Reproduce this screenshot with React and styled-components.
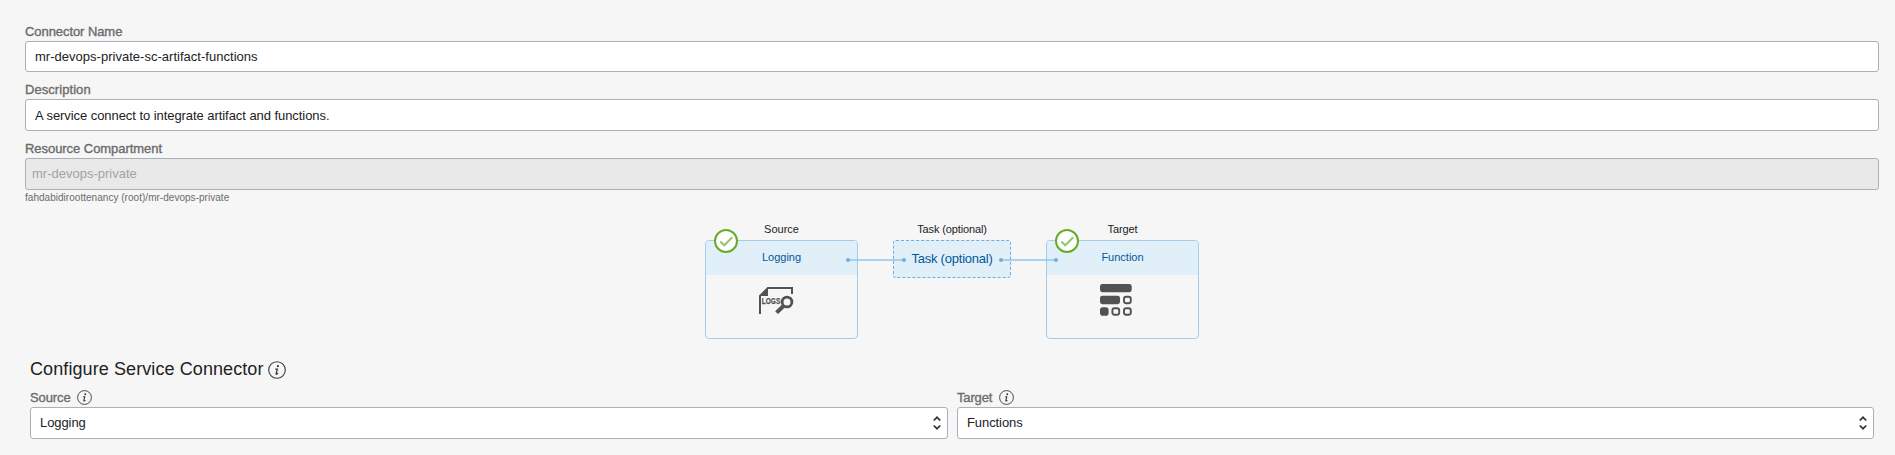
import React from "react";
import styled, { createGlobalStyle } from "styled-components";

const GlobalStyle = createGlobalStyle`
  * { box-sizing: border-box; }
  body {
    margin: 0;
    background: #f6f6f6;
    font-family: "Liberation Sans", Arial, sans-serif;
    color: #222;
    overflow: hidden;
  }
`;

const Page = styled.main`
  height: 455px;
  padding: 24px 16px 0 25px;
  display: flex;
  flex-direction: column;
  overflow: hidden;
`;

const Field = styled.div`
  display: flex;
  flex-direction: column;
  margin-bottom: ${(p) => p.$gap || 0}px;
`;

const Label = styled.label`
  display: flex;
  align-items: center;
  height: 17px;
  padding-bottom: 2px;
  font-size: 13px;
  line-height: 15px;
  color: #6b6b6b;
  -webkit-text-stroke: 0.35px #6b6b6b;
  letter-spacing: ${(p) => p.$spacing || 0}px;
`;

const Input = styled.input`
  width: 100%;
  height: ${(p) => p.$height || 32}px;
  padding: 0 9px;
  border: 1px solid #a9b0ba;
  border-radius: 3px;
  background: #fff;
  color: #222;
  font: 13px "Liberation Sans", Arial, sans-serif;
  letter-spacing: ${(p) => p.$spacing || 0}px;
  &:disabled {
    padding: 0 7px 2px 6px;
    background: #e9e9e9;
    color: #a3a3a3;
  }
`;

const Hint = styled.div`
  height: 16px;
  padding-top: 1px;
  font-size: 10px;
  line-height: 13px;
  color: #6b6b6b;
  letter-spacing: 0.03px;
`;

const Flow = styled.section`
  display: flex;
  align-items: flex-start;
  gap: 35px;
  margin: 16px 0 0 680px;
  height: 133px;
`;

const Step = styled.div`
  position: relative;
  width: ${(p) => p.$width}px;
  display: flex;
  flex-direction: column;
`;

const Caption = styled.div`
  height: 18px;
  font-size: 11px;
  line-height: 15px;
  text-align: center;
  color: #222;
  letter-spacing: ${(p) => p.$spacing || 0}px;
`;

const Card = styled.div`
  height: 99px;
  border: 1px solid #a3cbea;
  border-radius: 4px;
  overflow: hidden;
  display: flex;
  flex-direction: column;
  align-items: center;
`;

const CardHead = styled.div`
  width: 100%;
  height: 34px;
  background: #e1eff8;
  color: #00599c;
  font-size: 11px;
  line-height: 33px;
  text-align: center;
`;

const CardIcon = styled.div`
  margin-top: ${(p) => p.$top}px;
  margin-right: ${(p) => p.$right}px;
  line-height: 0;
`;

const TaskBox = styled.div`
  height: 38px;
  border: 1px dashed #6fade0;
  border-radius: 3px;
  background: #e1eff8;
  color: #00599c;
  font-size: 13px;
  line-height: 36px;
  text-align: center;
  letter-spacing: -0.22px;
`;

const CheckBadge = styled.svg`
  position: absolute;
  left: ${(p) => p.$left}px;
  top: 6px;
`;

const Link = styled.svg`
  position: absolute;
  left: ${(p) => p.$left}px;
  top: 35px;
  z-index: 1;
`;

const Heading = styled.h2`
  display: flex;
  align-items: center;
  gap: 4px;
  height: 22px;
  margin: 4px 0 0 5px;
  font-size: 18px;
  font-weight: 400;
  line-height: 20px;
  letter-spacing: 0.09px;
`;

const HeadingText = styled.span`
  padding-bottom: 2px;
`;

const Columns = styled.div`
  display: grid;
  grid-template-columns: 918px 917px;
  gap: 9px;
  margin: 9px 0 0 5px;
`;

const Select = styled.div`
  display: flex;
  align-items: center;
  justify-content: space-between;
  height: 32px;
  padding: 0 6px 0 9px;
  border: 1px solid #a9b0ba;
  border-radius: 3px;
  background: #fff;
  font-size: 13px;
  letter-spacing: -0.08px;
`;

const SelectValue = styled.span`
  padding-bottom: 2px;
`;

const InfoSvg = styled.svg`
  flex: none;
  margin-left: ${(p) => p.$left || 0}px;
`;

const Info = ({ size, left }) => (
  <InfoSvg $left={left} width={size} height={size} viewBox="0 0 18 18" fill="none" stroke="#3c3c3c">
    <circle cx="9" cy="9" r="8.3" strokeWidth="1.1" />
    <circle cx="9.9" cy="5.1" r="1.1" fill="#333" stroke="none" />
    <path d="M7.3 8.1h2L8.2 12.4q-.2 1 .7.7.6-.3 1.1-1" strokeWidth="1.35" />
  </InfoSvg>
);

const Check = ({ left }) => (
  <CheckBadge $left={left} width="24" height="26" viewBox="0 0 24 26" fill="none">
    <circle cx="12" cy="13" r="11" fill="#fff" stroke="#66ad27" strokeWidth="2" />
    <path d="M6.3 13.6l4 3.7 7.9-8" stroke="#91c56c" strokeWidth="2" />
  </CheckBadge>
);

const Connector = ({ left, width }) => (
  <Link $left={left} width={width} height="6" viewBox={`0 0 ${width} 6`}>
    <path d={`M2 3H${width - 2}`} stroke="#91c4ea" strokeWidth="1.4" />
    <circle cx="2" cy="3" r="2" fill="#6fade0" />
    <circle cx={width - 2} cy="3" r="2" fill="#6fade0" />
  </Link>
);

const LogsIcon = () => (
  <svg width="35" height="27" viewBox="0 0 35 27" fill="none" stroke="#525252">
    <path d="M9 0v9H2v18H0V8.5L8.5 0H34v7h-2V2H9z" fill="#525252" stroke="none" />
    <text x="2.8" y="17" fontSize="9" fontWeight="700" fill="#525252" stroke="#525252" strokeWidth="0.25" textLength="18.5" lengthAdjust="spacingAndGlyphs">LOGS</text>
    <circle cx="28" cy="15" r="4.9" strokeWidth="2.8" />
    <path d="M24.2 19.2l-6.6 6.4" strokeWidth="4" />
  </svg>
);

const FunctionIcon = () => (
  <svg width="32" height="32" viewBox="0 0 32 32" fill="#525252">
    <rect x="0" y="0" width="31.7" height="8.2" rx="2.4" />
    <rect x="0" y="11.8" width="20" height="8.4" rx="2.4" />
    <rect x="0" y="23.3" width="8.6" height="8.4" rx="2.8" />
    <g fill="none" stroke="#525252" strokeWidth="1.9">
      <rect x="24" y="12.8" width="6.8" height="6.5" rx="2.2" />
      <rect x="12.4" y="24.3" width="6.8" height="6.5" rx="2.2" />
      <rect x="24" y="24.3" width="6.8" height="6.5" rx="2.2" />
    </g>
  </svg>
);

const Arrows = () => (
  <svg width="8" height="14" viewBox="0 0 8 14" fill="none" stroke="#333" strokeWidth="1.7">
    <path d="M.7 4.5L4 1.3l3.3 3.2M.7 9.5L4 12.7l3.3-3.2" />
  </svg>
);

export default function App() {
  return (
    <>
      <GlobalStyle />
      <Page>
        <Field $gap={10}>
          <Label $spacing={-0.07}>Connector Name</Label>
          <Input $height={31} $spacing={0.02} defaultValue="mr-devops-private-sc-artifact-functions" />
        </Field>
        <Field $gap={10}>
          <Label $spacing={0.06}>Description</Label>
          <Input $spacing={-0.06} defaultValue="A service connect to integrate artifact and functions." />
        </Field>
        <Field>
          <Label $spacing={-0.05}>Resource Compartment</Label>
          <Input disabled defaultValue="mr-devops-private" />
          <Hint>fahdabidiroottenancy (root)/mr-devops-private</Hint>
        </Field>

        <Flow>
          <Step $width={153}>
            <Caption>Source</Caption>
            <Card>
              <CardHead>Logging</CardHead>
              <CardIcon $top={12} $right={11}><LogsIcon /></CardIcon>
            </Card>
            <Check left={9} />
            <Connector left={141} width={60} />
          </Step>
          <Step $width={118}>
            <Caption $spacing={-0.12}>Task (optional)</Caption>
            <TaskBox>Task (optional)</TaskBox>
            <Connector left={106} width={59} />
          </Step>
          <Step $width={153}>
            <Caption $spacing={-0.1}>Target</Caption>
            <Card>
              <CardHead>Function</CardHead>
              <CardIcon $top={9} $right={13}><FunctionIcon /></CardIcon>
            </Card>
            <Check left={9} />
          </Step>
        </Flow>

        <Heading>
          <HeadingText>Configure Service Connector</HeadingText>
          <Info size={18} />
        </Heading>
        <Columns>
          <Field>
            <Label $spacing={-0.1}>Source<Info size={15} left={6} /></Label>
            <Select><SelectValue>Logging</SelectValue><Arrows /></Select>
          </Field>
          <Field>
            <Label $spacing={-0.15}>Target<Info size={15} left={7} /></Label>
            <Select><SelectValue>Functions</SelectValue><Arrows /></Select>
          </Field>
        </Columns>
      </Page>
    </>
  );
}
